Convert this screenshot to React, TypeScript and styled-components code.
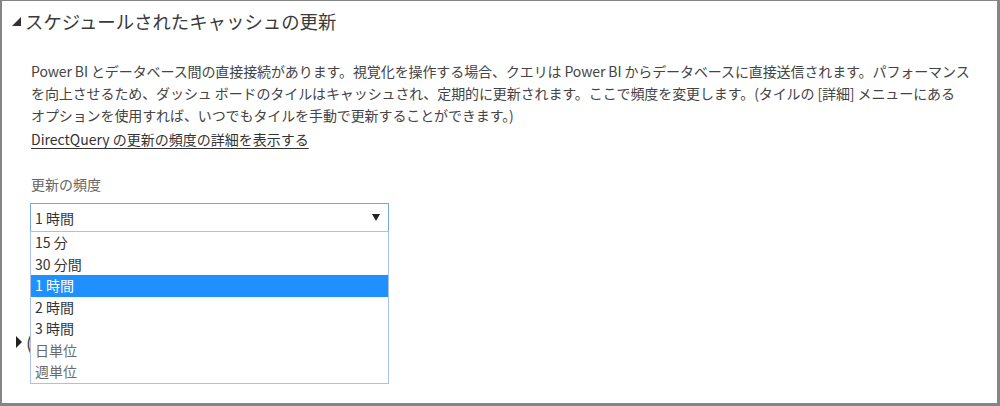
import React from "react";
import styled, { createGlobalStyle } from "styled-components";

const Global = createGlobalStyle`
  html, body { margin: 0; padding: 0; background: #ffffff; }
  body { font-family: "Noto Sans CJK JP", "Noto Sans", sans-serif; }
  * { box-sizing: border-box; }
`;

const Frame = styled.div`
  width: 1000px;
  height: 406px;
  border-style: solid;
  border-color: #858585;
  border-width: 1px 3px 3px 2px;
  background: #ffffff;
  position: relative;
  overflow: hidden;
  padding-top: 8px;
`;

const SectionHeader = styled.div<{ $top?: number; $indent?: number }>`
  display: flex;
  align-items: center;
  height: 24px;
  padding-left: ${(p) => p.$indent ?? 10}px;
  margin-top: ${(p) => p.$top ?? 0}px;
  font-size: 18.4px;
  color: #3a3a3a;
  white-space: nowrap;
`;

const Caret = styled.svg`
  flex: none;
  margin-right: 4px;
`;

const Body = styled.div`
  padding-left: 28px;
  padding-top: 27px;
`;

const Para = styled.div`
  padding-left: 1px;
  font-size: 14px;
  line-height: 22px;
  color: #444;
  white-space: nowrap;
  letter-spacing: -0.1px;
`;

const Link = styled.a`
  display: inline-block;
  margin-top: 2px;
  margin-left: 1px;
  font-size: 14px;
  line-height: 22px;
  color: #333;
  text-decoration: underline;
  text-underline-offset: 3px;
  cursor: pointer;
`;

const Label = styled.div`
  margin-top: 23px;
  padding-left: 1px;
  font-size: 14px;
  line-height: 22px;
  color: #666;
`;

const SelectWrap = styled.div`
  position: relative;
  width: 359px;
  margin-top: 8px;
`;

const SelectBox = styled.div`
  height: 29px;
  border: 1px solid #78a6e2;
  display: flex;
  align-items: center;
  justify-content: space-between;
  padding: 0 8px 0 4px;
  font-size: 14px;
  color: #333;
`;

const List = styled.ul`
  position: absolute;
  left: 0;
  top: 28px;
  width: 359px;
  margin: 0;
  padding: 0;
  list-style: none;
  border: 1px solid #a9c2e4;
  background: #ffffff;
  z-index: 2;
`;

const Item = styled.li<{ $active?: boolean; $muted?: boolean }>`
  height: 21.5px;
  line-height: 21.5px;
  padding-left: 4px;
  font-size: 14px;
  color: ${(p) => (p.$active ? "#ffffff" : p.$muted ? "#6a6a6a" : "#333")};
  background: ${(p) => (p.$active ? "#1e90ff" : "transparent")};
`;

const options = ["15 分", "30 分間", "1 時間", "2 時間", "3 時間", "日単位", "週単位"];

export default function App() {
  return (
    <>
      <Global />
      <Frame>
        <SectionHeader>
          <Caret width="9" height="9" viewBox="0 0 9 9">
            <polygon points="9,0 9,9 0,9" fill="#333" />
          </Caret>
          スケジュールされたキャッシュの更新
        </SectionHeader>
        <Body>
          <Para>
            Power BI とデータベース間の直接接続があります。視覚化を操作する場合、クエリは Power BI からデータベースに直接送信されます。パフォーマンス
          </Para>
          <Para>
            を向上させるため、ダッシュ ボードのタイルはキャッシュされ、定期的に更新されます。ここで頻度を変更します。(タイルの [詳細] メニューにある
          </Para>
          <Para>オプションを使用すれば、いつでもタイルを手動で更新することができます。)</Para>
          <Link>DirectQuery の更新の頻度の詳細を表示する</Link>
          <Label>更新の頻度</Label>
          <SelectWrap>
            <SelectBox>
              <span>1 時間</span>
              <svg width="8" height="7" viewBox="0 0 8 7">
                <polygon points="0,0 8,0 4,7" fill="#222" />
              </svg>
            </SelectBox>
            <List>
              {options.map((o, i) => (
                <Item key={o} $active={i === 2} $muted={i >= 5}>
                  {o}
                </Item>
              ))}
            </List>
          </SelectWrap>
        </Body>
        <SectionHeader $top={98} $indent={14}>
          <Caret width="6" height="12" viewBox="0 0 6 12">
            <polygon points="0,0 6,6 0,12" fill="#222" />
          </Caret>
          (
        </SectionHeader>
      </Frame>
    </>
  );
}
